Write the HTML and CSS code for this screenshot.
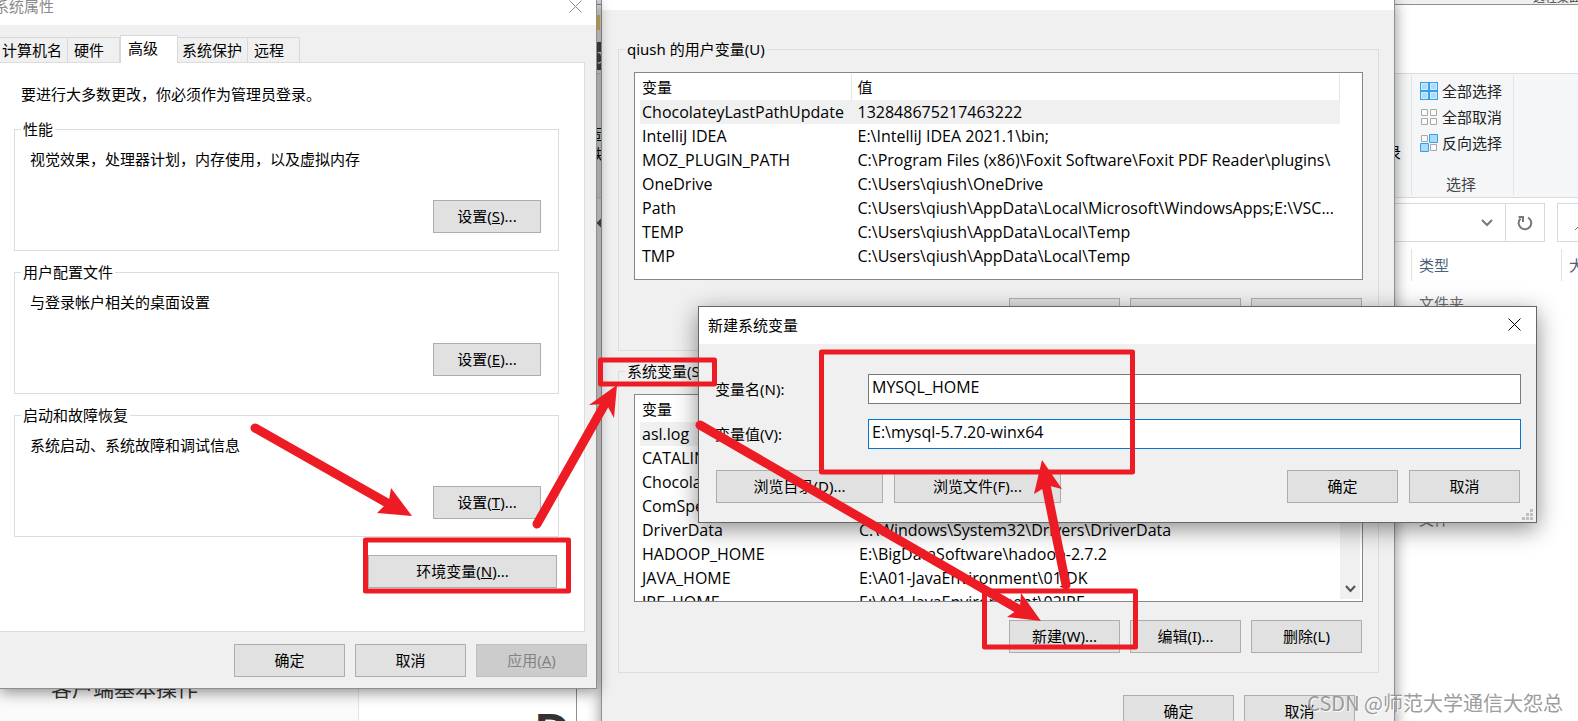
FILE: index.html
```html
<!DOCTYPE html>
<html lang="zh-CN">
<head>
<meta charset="utf-8">
<title>新建系统变量</title>
<link rel="stylesheet" href="styles.css">
</head>
<body>
<main class="desktop">
  <div class="topbar"><span>远程桌面</span></div>

  <section class="notes">
    <div class="notes-side">客户端基本操作</div>
    <div class="notes-main">D</div>
  </section>

  <section class="window explorer">
    <div class="ex-title"><span class="folder"></span></div>
    <div class="ex-tabs"><span class="file-tab">文件</span></div>
    <div class="ribbon">
      <div class="ribbon-left">
        <span class="pin">固定到<br>快速访问</span>
        <span class="history">记录</span>
      </div>
      <div class="ribbon-select">
        <button class="ribbon-item" type="button">
          <svg width="18" height="18" viewBox="0 0 18 18"><rect width="18" height="18" fill="#3b9de6"/><path d="M1.500 1.500h6v6h-6zM10.500 1.500h6v6h-6zM1.500 10.500h6v6h-6zM10.500 10.500h6v6h-6z" fill="#a9dcfb" stroke="#d4eefd"/></svg>
          全部选择
        </button>
        <button class="ribbon-item" type="button">
          <svg width="18" height="18" viewBox="0 0 18 18"><path d="M1.500 1.500h6v6h-6zM10.500 1.500h6v6h-6zM1.500 10.500h6v6h-6zM10.500 10.500h6v6h-6z" fill="#fafafa" stroke="#a8a8a8"/></svg>
          全部取消
        </button>
        <button class="ribbon-item" type="button">
          <svg width="18" height="18" viewBox="0 0 18 18"><path d="M1.500 1.500h6v6h-6zM10.500 10.500h6v6h-6z" fill="#fafafa" stroke="#a8a8a8"/><path d="M9.500 .5h8v8h-8zM.5 9.500h8v8h-8z" fill="#a9dcfb" stroke="#3b9de6"/></svg>
          反向选择
        </button>
        <span class="ribbon-name">选择</span>
      </div>
    </div>
    <div class="address-row">
      <svg class="back" width="16" height="16" viewBox="0 0 16 16"><path d="M15 8H1M6 3L1 8l5 5" fill="none" stroke="#555" stroke-width="2"/></svg>
      <div class="address">
        <svg class="drop" width="12" height="8" viewBox="0 0 12 8"><path d="M1 1l5 5 5-5" fill="none" stroke="#777" stroke-width="2"/></svg>
        <button class="refresh" type="button" aria-label="刷新">
          <svg width="16" height="16" viewBox="0 0 16 16"><path d="M11 2.500a6.300 6.300 0 1 1-7.500 1M1.500 2h4.500v5" fill="none" stroke="#777" stroke-width="2"/></svg>
        </button>
      </div>
      <div class="search"><svg width="16" height="16" viewBox="0 0 16 16"><circle cx="9" cy="6" r="5" fill="none" stroke="#777"/><path d="M5 10l-5 5" stroke="#777"/></svg></div>
    </div>
    <div class="columns"><span class="col-type">类型</span><span class="col-size">大小</span></div>
    <div class="files"><span>文件夹</span><span>文件</span></div>
  </section>

  <section class="window env">
    <header class="env-title"></header>
    <div class="env-body">
      <fieldset class="env-group">
        <legend>qiush 的用户变量(U)</legend>
        <div class="list">
          <table>
            <thead><tr><th class="name">变量</th><th>值</th></tr></thead>
            <tbody>
              <tr class="selected"><td>ChocolateyLastPathUpdate</td><td>132848675217463222</td></tr>
              <tr><td>IntelliJ IDEA</td><td>E:\IntelliJ IDEA 2021.1\bin;</td></tr>
              <tr><td>MOZ_PLUGIN_PATH</td><td>C:\Program Files (x86)\Foxit Software\Foxit PDF Reader\plugins\</td></tr>
              <tr><td>OneDrive</td><td>C:\Users\qiush\OneDrive</td></tr>
              <tr><td>Path</td><td>C:\Users\qiush\AppData\Local\Microsoft\WindowsApps;E:\VSC...</td></tr>
              <tr><td>TEMP</td><td>C:\Users\qiush\AppData\Local\Temp</td></tr>
              <tr><td>TMP</td><td>C:\Users\qiush\AppData\Local\Temp</td></tr>
            </tbody>
          </table>
          <div class="gutter"></div>
        </div>
        <div class="actions">
          <button class="btn" type="button">新建(N)...</button>
          <button class="btn" type="button">编辑(E)...</button>
          <button class="btn" type="button">删除(D)</button>
        </div>
      </fieldset>
      <fieldset class="env-group">
        <legend>系统变量(S)</legend>
        <div class="list">
          <table>
            <thead><tr><th class="name">变量</th><th>值</th></tr></thead>
            <tbody>
              <tr class="selected"><td>asl.log</td><td></td></tr>
              <tr><td>CATALINA_HOME</td><td></td></tr>
              <tr><td>ChocolateyInstall</td><td></td></tr>
              <tr><td>ComSpec</td><td></td></tr>
              <tr><td>DriverData</td><td>C:\Windows\System32\Drivers\DriverData</td></tr>
              <tr><td>HADOOP_HOME</td><td>E:\BigDataSoftware\hadoop-2.7.2</td></tr>
              <tr><td>JAVA_HOME</td><td>E:\A01-JavaEnvironment\01JDK</td></tr>
              <tr><td>JRE_HOME</td><td>E:\A01-JavaEnvironment\02JRE</td></tr>
            </tbody>
          </table>
          <div class="gutter scroll"><svg width="11" height="8" viewBox="0 0 11 8"><path d="M1 1l4.500 5L10 1" fill="none" stroke="#505050" stroke-width="2"/></svg></div>
        </div>
        <div class="actions">
          <button class="btn" type="button">新建(W)...</button>
          <button class="btn" type="button">编辑(I)...</button>
          <button class="btn" type="button">删除(L)</button>
        </div>
      </fieldset>
      <div class="actions env-footer">
        <button class="btn" type="button">确定</button>
        <button class="btn" type="button">取消</button>
      </div>
    </div>
  </section>

  <section class="window system">
    <header class="sys-title">
      <span>系统属性</span>
      <button class="close" type="button" aria-label="关闭"><svg width="13" height="13" viewBox="0 0 13 13"><path d="M.5.5l12 12M12.500.5l-12 12" stroke="#8a8a8a" fill="none"/></svg></button>
    </header>
    <nav class="tabs">
      <button class="tab tab-a" type="button">计算机名</button>
      <button class="tab tab-b" type="button">硬件</button>
      <button class="tab tab-c active" type="button">高级</button>
      <button class="tab tab-d" type="button">系统保护</button>
      <button class="tab tab-e" type="button">远程</button>
    </nav>
    <div class="pane">
      <p class="notice">要进行大多数更改，你必须作为管理员登录。</p>
      <div class="groups">
        <fieldset class="sys-group">
          <legend>性能</legend>
          <p>视觉效果，处理器计划，内存使用，以及虚拟内存</p>
          <button class="btn" type="button">设置(<u>S</u>)...</button>
        </fieldset>
        <fieldset class="sys-group">
          <legend>用户配置文件</legend>
          <p>与登录帐户相关的桌面设置</p>
          <button class="btn" type="button">设置(<u>E</u>)...</button>
        </fieldset>
        <fieldset class="sys-group">
          <legend>启动和故障恢复</legend>
          <p>系统启动、系统故障和调试信息</p>
          <button class="btn" type="button">设置(<u>T</u>)...</button>
        </fieldset>
      </div>
      <button class="btn env-open" type="button">环境变量(<u>N</u>)...</button>
    </div>
    <div class="actions sys-footer">
      <button class="btn" type="button">确定</button>
      <button class="btn" type="button">取消</button>
      <button class="btn" type="button" disabled>应用(<u>A</u>)</button>
    </div>
  </section>

  <form class="window dialog">
    <header class="dlg-title">
      <span>新建系统变量</span>
      <button class="close" type="button" aria-label="关闭"><svg width="13" height="13" viewBox="0 0 13 13"><path d="M.5.5l12 12M12.500.5l-12 12" stroke="#000" fill="none"/></svg></button>
    </header>
    <div class="dlg-body">
      <div class="fields">
        <label for="var-name">变量名(N):</label>
        <input id="var-name" type="text" value="MYSQL_HOME">
        <label for="var-value">变量值(V):</label>
        <input id="var-value" class="focused" type="text" value="E:\mysql-5.7.20-winx64">
      </div>
      <div class="actions dlg-actions">
        <button class="btn browse" type="button">浏览目录(D)...</button>
        <button class="btn browse" type="button">浏览文件(F)...</button>
        <button class="btn ok" type="button">确定</button>
        <button class="btn" type="button">取消</button>
      </div>
    </div>
    <svg class="grip" width="11" height="11" viewBox="0 0 11 11"><path d="M8 0h3v3H8zM4 4h3v3H4zM8 4h3v3H8zM0 8h3v3H0zM4 8h3v3H4zM8 8h3v3H8z" fill="#bfbfbf"/></svg>
  </form>

  <svg class="marks" width="1578" height="721" viewBox="0 0 1578 721">
    <g fill="none" stroke="#ed1c24" stroke-width="5" stroke-linejoin="round">
      <rect x="365.500" y="540" width="203" height="51"/>
      <rect x="600.500" y="360" width="114" height="24"/>
      <rect x="821.500" y="352" width="311" height="120"/>
      <rect x="984.500" y="591" width="151" height="56"/>
    </g>
    <g stroke="#ed1c24" stroke-width="9" stroke-linecap="round">
      <path d="M255 428L389 504M537 524L606 402M700 425L1020 610M1066 585L1046 485"/>
    </g>
    <g fill="#ed1c24">
      <path d="M412 516L391 488 389 500 385 505 377 513z"/>
      <path d="M617 385L589 405 602 404 608 407 614 418z"/>
      <path d="M1041 621L1021 593 1020 606 1016 611 1007 617z"/>
      <path d="M1042 460L1034 494 1044 488 1050 486 1062 489z"/>
    </g>
  </svg>
  <div class="watermark">CSDN @师范大学通信大怨总</div>
</main>
</body>
</html>
```

FILE: styles.css
```css
* { box-sizing: border-box; }

body {
  margin: 0;
  font: 15px/20px "Noto Sans", "Noto Sans CJK SC", sans-serif;
  color: #000;
}

button, input { font: inherit; color: inherit; }
button { cursor: default; white-space: nowrap; }
p { margin: 0; }
svg { display: block; flex: none; }

.desktop {
  position: relative;
  height: 100vh;
  overflow: hidden;
  background: #fff;
}

.window {
  position: absolute;
  background: #f0f0f0;
  border: 1px solid #8f8f8f;
}

.btn {
  height: 33px;
  width: 111px;
  padding: 0 0 2px;
  border: 1px solid #adadad;
  background: #e1e1e1;
}
.btn:disabled { background: #ccc; border-color: #bfbfbf; color: #838383; }

.actions { display: flex; justify-content: flex-end; gap: 10px; }

.close { border: 0; padding: 0; background: none; }

fieldset { margin: 0; min-width: 0; border: 1px solid #dcdcdc; }
legend { padding: 0 2px; margin-left: 6px; }

/* Background: title strip and notes page */
.topbar {
  display: flex;
  justify-content: flex-end;
  align-items: flex-end;
  height: 4px;
  overflow: hidden;
  background: #f0f0f0;
  font-size: 12px;
  line-height: 12px;
  color: #444;
}
.topbar span { flex: none; margin-right: -3px; }

.notes {
  position: absolute;
  left: 0;
  top: 660px;
  width: 576px;
  bottom: 0;
  display: flex;
  overflow: hidden;
}
.notes-side {
  width: 359px;
  padding: 13px 0 0 51px;
  background: #fafafa;
  border-right: 1px solid #e4e4e4;
  font-size: 21px;
  line-height: 30px;
  color: #333;
}
.notes-main {
  flex: 1;
  padding: 46px 0 0 176px;
  font: bold 48px/50px "Liberation Sans", sans-serif;
  color: #333;
}

/* File explorer */
.explorer {
  left: 576px;
  top: 4px;
  right: 0;
  bottom: 0;
  border-right: 0;
  border-bottom: 0;
  background: #fff;
  overflow: hidden;
}
.ex-title { display: flex; height: 37px; padding: 10px 0 0 7px; }
.folder { width: 16px; height: 15px; background: #ffd868; }
.ex-tabs { height: 31px; }
.file-tab {
  display: block;
  width: 66px;
  height: 28px;
  padding-left: 20px;
  background: #505050;
  color: #fff;
  line-height: 28px;
}
.ribbon {
  display: grid;
  grid-template-columns: 834px 103px 1fr;
  height: 125px;
  padding: 2px 0;
  border-top: 1px solid #dadbdc;
  border-bottom: 1px solid #dadbdc;
  background: #f5f6f7;
}
.ribbon-left {
  display: flex;
  justify-content: space-between;
  padding: 48px 10px 0 12px;
}
.history { padding-top: 18px; }
.ribbon-select {
  display: flex;
  flex-direction: column;
  padding: 2px 8px 0;
  border: solid #e2e3e4;
  border-width: 0 1px;
}
.ribbon-item {
  display: flex;
  align-items: center;
  gap: 4px;
  height: 26px;
  padding: 0;
  border: 0;
  background: none;
  color: #222;
}
.ribbon-name { padding: 18px 0 0 26px; color: #444; }
.address-row {
  display: flex;
  align-items: center;
  gap: 12px;
  padding: 5px 0 0 20px;
}
.address {
  flex: 1;
  display: flex;
  align-items: center;
  justify-content: flex-end;
  gap: 12px;
  height: 39px;
  border: 1px solid #d9d9d9;
}
.refresh {
  display: grid;
  place-items: center;
  width: 39px;
  height: 37px;
  padding: 0;
  border: 0;
  border-left: 1px solid #d9d9d9;
  background: none;
}
.search {
  display: flex;
  align-items: center;
  width: 21px;
  height: 39px;
  padding-left: 17px;
  border: 1px solid #d9d9d9;
  border-right: 0;
}
.columns {
  display: flex;
  height: 32px;
  margin: 7px 0 0 834px;
  line-height: 32px;
  color: #4c607a;
}
.columns span { flex: none; padding-left: 7px; border-left: 1px solid #e2e2e2; }
.columns .col-type { width: 150px; }
.files {
  display: flex;
  flex-direction: column;
  gap: 196px;
  padding: 12px 0 0 842px;
  color: #6d6d6d;
}

/* Environment variables */
.env {
  left: 601px;
  top: -1px;
  width: 794px;
  bottom: -40px;
  box-shadow: 0 3px 14px rgba(0, 0, 0, .45);
}
.env-title { height: 10px; background: #fff; }
.env-body { padding: 29px 15px 0 16px; }
.env-group { padding: 13px 15px 19px; }
.env-group + .env-group { margin-top: 10px; }
.env-group legend { margin-left: -9px; }
.env-group .actions { padding-right: 1px; }
.env-footer { padding: 22px 24px 0 0; }
.list {
  display: flex;
  height: 208px;
  margin-bottom: 18px;
  padding: 1px 2px 2px 5px;
  overflow: hidden;
  border: 1px solid #828790;
  background: #fff;
}
.list table {
  flex: 1;
  align-self: flex-start;
  table-layout: fixed;
  border-collapse: separate;
  border-spacing: 0;
}
.list th { height: 26px; padding: 0 6px; font-weight: normal; text-align: left; border-right: 1px solid #e5e5e5; }
.list th.name { width: 213px; padding-left: 2px; }
.list td {
  height: 24px;
  padding: 0 6px;
  font-family: "Open Sans", "Noto Sans CJK SC", sans-serif;
  font-size: 16px;
  white-space: nowrap;
}
.list td:first-child { padding: 0 2px; }
.selected { background: #f0f0f0; }
.gutter { width: 20px; }
.scroll {
  display: flex;
  align-items: flex-end;
  justify-content: center;
  padding-bottom: 6px;
  background: #f0f0f0;
}

/* System properties */
.system {
  left: 0;
  top: 0;
  width: 597px;
  border-width: 0 1px 1px 0;
  box-shadow: 0 3px 14px rgba(0, 0, 0, .45);
}
.sys-title {
  display: flex;
  justify-content: space-between;
  height: 25px;
  padding: 0 14px 0 0;
  background: #fff;
  color: #8a8a8a;
  line-height: 12px;
}
.sys-title span { margin-left: -6px; }
.sys-title .close { height: 13px; }
.tabs { display: flex; align-items: flex-end; height: 37px; }
.tab {
  height: 25px;
  padding: 0 0 0 6px;
  border: 1px solid #d9d9d9;
  border-width: 1px 1px 0 0;
  background: #f0f0f0;
  text-align: left;
}
.tab-a { width: 68px; padding-left: 2px; }
.tab-b { width: 52px; }
.tab-c { width: 58px; }
.tab-d { width: 70px; padding-left: 4px; }
.tab-e { width: 52px; }
.tab.active {
  height: 28px;
  margin-bottom: -1px;
  padding: 0 0 4px 7px;
  border-left-width: 1px;
  background: #fff;
  z-index: 1;
}
.pane {
  display: flex;
  flex-direction: column;
  margin-right: 11px;
  padding: 21px 25px 43px 14px;
  border: 1px solid #dcdcdc;
  border-left: 0;
  background: #fff;
}
.notice { padding-left: 7px; }
.groups { display: flex; flex-direction: column; gap: 11px; margin-top: 15px; }
.sys-group { padding: 10px 17px 17px 15px; }
.sys-group legend { margin-left: -9px; }
.sys-group .btn { display: block; width: 108px; margin: 31px 0 0 auto; }
.env-open { align-self: flex-end; width: 189px; margin: 18px 2px 0 0; }
.sys-footer { padding: 12px 9px 11px; }

/* New variable dialog */
.dialog {
  left: 698px;
  top: 306px;
  width: 839px;
  border-color: #666;
  box-shadow: 0 6px 22px rgba(0, 0, 0, .45);
}
.dlg-title {
  display: flex;
  align-items: center;
  justify-content: space-between;
  height: 37px;
  padding: 0 15px 2px 9px;
  background: #fff;
}
.dlg-body { padding: 30px 15px 19px 16px; }
.fields {
  display: grid;
  grid-template-columns: 153px 1fr;
  row-gap: 15px;
  align-items: center;
}
.fields input {
  width: 100%;
  height: 30px;
  padding: 0 3px 4px;
  border: 1px solid #7a7a7a;
  border-radius: 0;
  background: #fff;
  font-family: "Open Sans", "Noto Sans CJK SC", sans-serif;
  font-size: 16px;
  outline: 0;
}
.fields .focused { border-color: #0078d7; }
.dlg-actions { gap: 11px; margin: 21px 1px 0; }
.dlg-actions .browse { width: 167px; }
.dlg-actions .ok { margin-left: auto; }
.grip { position: absolute; right: 3px; bottom: 2px; }

/* Annotations */
.marks { position: absolute; left: 0; top: 0; }
.watermark {
  position: absolute;
  right: 15px;
  bottom: 3px;
  font: 20px/30px "Noto Sans CJK SC", sans-serif;
  color: rgba(130, 130, 130, .8);
  text-shadow: 1px 1px 1px #fff;
}
```
